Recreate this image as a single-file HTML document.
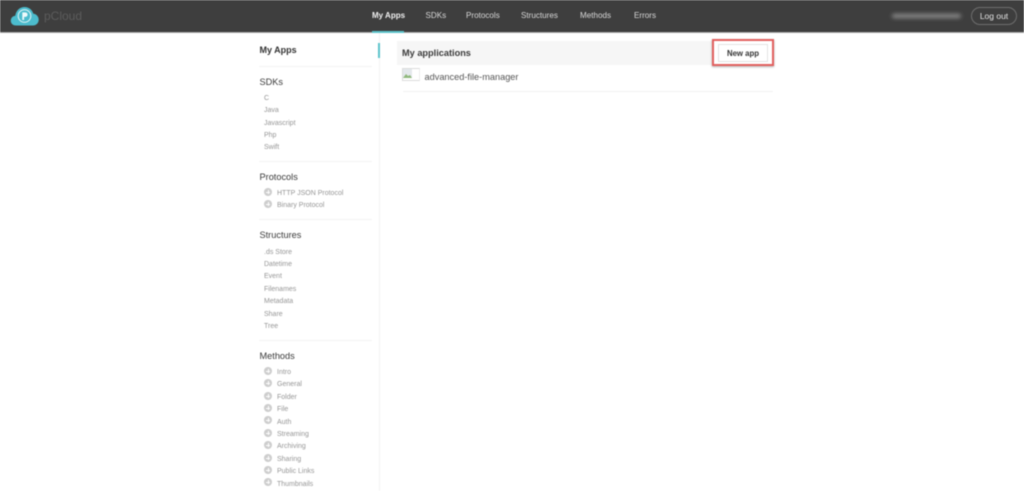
<!DOCTYPE html>
<html lang="en"><head><meta charset="utf-8"><title>pCloud - My Apps</title>
<style>
html,body{margin:0;padding:0;background:#fff;width:1024px;height:491px;overflow:hidden;font-family:"Liberation Sans",sans-serif}
#r{position:relative;width:1024px;height:491px;overflow:hidden;filter:blur(.4px)}
#r div{position:absolute;white-space:nowrap}
.n{top:10px;font-size:8.1px;line-height:12px;color:#d8d8d8}
.h{left:259.5px;font-size:9.2px;line-height:12px;color:#3a3a3a}
.s{left:264px;font-size:7px;line-height:10px;color:#969696;margin-top:1px}
.i{left:277px;font-size:7px;line-height:10px;color:#969696;margin-top:1px}
.c{left:264px;width:8px;height:8px;border-radius:50%;background:#cdcdcd}
.c:before{content:"";position:absolute;left:2px;top:3.5px;width:4px;height:1px;background:#fff}
.c:after{content:"";position:absolute;left:3.5px;top:2px;width:1px;height:4px;background:#fff}
.l{left:259px;width:113px;height:1px;background:#f3f3f3}
</style></head><body><div id="r">
<div style="left:0;top:0;width:1024px;height:32px;background:#3e3e3e"></div>
<div style="left:0;top:32px;width:1024px;height:1px;background:#a8a8a8"></div>
<svg style="position:absolute;left:10px;top:6px" width="30" height="21" viewBox="0 0 30 21"><path d="M6 19.5C2.5 19.5.8 17.2.8 14.6c0-2.6 1.800-4.600 4.400-4.900C6.300 4.200 10 1 14.500 1c4.300 0 7.700 2.800 8.800 6.600 3 .4 5.400 3 5.400 6.100 0 3.200-2.500 5.800-5.800 5.800z" fill="#4cbccd"/><circle cx="14.500" cy="10" r="6.300" fill="#4cbccd" stroke="#e4f5f8" stroke-width="1"/><path d="M12.300 14V6.400h2.900c1.500 0 2.400.9 2.400 2.200s-.9 2.300-2.400 2.300h-1.100V14z" fill="#eefafb"/></svg>
<div style="left:44px;top:9px;font-size:12px;line-height:15px;color:#5c5c5c">pCloud</div>
<div class="n" style="left:372px;font-weight:bold;color:#f0f0f0;font-size:8px">My Apps</div>
<div style="left:372px;top:31px;width:32px;height:2px;background:#5cc4cc"></div>
<div class="n" style="left:425.500px">SDKs</div>
<div class="n" style="left:466px">Protocols</div>
<div class="n" style="left:521px">Structures</div>
<div class="n" style="left:580px">Methods</div>
<div class="n" style="left:634px">Errors</div>
<div style="left:892px;top:14px;width:69px;height:4px;border-radius:3px;background:#8f8f8f;filter:blur(2px)"></div>
<div style="left:971px;top:7px;width:44px;height:16px;border:1px solid #6e6e6e;border-radius:9px;color:#e2e2e2;font-size:8.5px;line-height:17px;text-align:center">Log out</div>

<div style="left:379px;top:33px;width:1px;height:458px;background:#f3f3f3"></div>
<div style="left:378px;top:43px;width:2px;height:15px;background:#5cc4cc"></div>

<div class="h" style="top:44px;font-weight:bold;font-size:9px;color:#333">My Apps</div>
<div class="l" style="top:66px"></div>
<div class="h" style="top:76px">SDKs</div>
<div class="s" style="top:93px">C</div>
<div class="s" style="top:105px">Java</div>
<div class="s" style="top:118px">Javascript</div>
<div class="s" style="top:130px">Php</div>
<div class="s" style="top:142px">Swift</div>
<div class="l" style="top:161px"></div>
<div class="h" style="top:171px">Protocols</div>
<div class="c" style="top:188px"></div><div class="i" style="top:188px">HTTP JSON Protocol</div>
<div class="c" style="top:200px"></div><div class="i" style="top:200px">Binary Protocol</div>
<div class="l" style="top:219px"></div>
<div class="h" style="top:229px">Structures</div>
<div class="s" style="top:247px">.ds Store</div>
<div class="s" style="top:259px">Datetime</div>
<div class="s" style="top:271px">Event</div>
<div class="s" style="top:284px">Filenames</div>
<div class="s" style="top:296px">Metadata</div>
<div class="s" style="top:309px">Share</div>
<div class="s" style="top:321px">Tree</div>
<div class="l" style="top:340px"></div>
<div class="h" style="top:350px">Methods</div>
<div class="c" style="top:367px"></div><div class="i" style="top:367px">Intro</div>
<div class="c" style="top:379px"></div><div class="i" style="top:379px">General</div>
<div class="c" style="top:392px"></div><div class="i" style="top:392px">Folder</div>
<div class="c" style="top:404px"></div><div class="i" style="top:404px">File</div>
<div class="c" style="top:416px"></div><div class="i" style="top:417px">Auth</div>
<div class="c" style="top:429px"></div><div class="i" style="top:429px">Streaming</div>
<div class="c" style="top:441px"></div><div class="i" style="top:441px">Archiving</div>
<div class="c" style="top:454px"></div><div class="i" style="top:454px">Sharing</div>
<div class="c" style="top:466px"></div><div class="i" style="top:466px">Public Links</div>
<div class="c" style="top:478px"></div><div class="i" style="top:479px">Thumbnails</div>

<div style="left:397px;top:41px;width:315px;height:24px;background:#f6f6f6"></div>
<div style="left:402px;top:47px;font-size:9.200px;line-height:13px;font-weight:bold;color:#3a3a3a">My applications</div>

<div style="left:712px;top:39px;width:58px;height:23px;border:2px solid #e2605f;box-shadow:0 1px 2px rgba(0,0,0,.3)"></div>
<div style="left:718px;top:44px;width:48px;height:16px;border:1px solid #e4e4e4;background:#fff;font-size:7.800px;font-weight:bold;line-height:17px;text-align:center;color:#333">New app</div>

<div style="left:402px;top:68px;width:16px;height:11px;border:1px solid #dcdcdc;border-right-color:#ececec"></div>
<svg style="position:absolute;left:403px;top:69px" width="10" height="10" viewBox="0 0 10 10"><rect x="0" y="0" width="9" height="9" fill="#e4e8ec"/><path d="M0 9l3-4 2 2 2-1 2 3z" fill="#8fb87c"/></svg>
<div style="left:424.500px;top:71px;font-size:9.200px;line-height:12px;color:#555">advanced-file-manager</div>
<div style="left:403px;top:91px;width:370px;height:1px;background:#f2f2f2"></div>
</div></body></html>
